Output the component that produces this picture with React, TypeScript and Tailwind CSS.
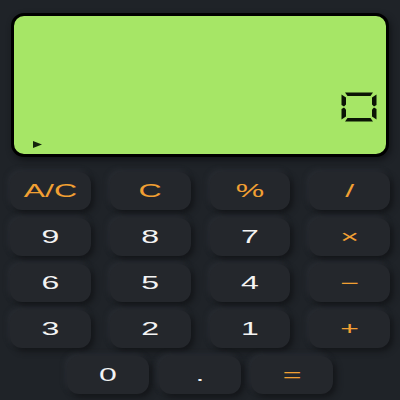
import React from "react";

type Key = { label: string; op?: boolean };

const rows: Key[][] = [
  [{ label: "A/C", op: true }, { label: "C", op: true }, { label: "%", op: true }, { label: "/", op: true }],
  [{ label: "9" }, { label: "8" }, { label: "7" }, { label: "×", op: true }],
  [{ label: "6" }, { label: "5" }, { label: "4" }, { label: "−", op: true }],
  [{ label: "3" }, { label: "2" }, { label: "1" }, { label: "+", op: true }],
];

function Btn({ k, w }: { k: Key; w: string }) {
  return (
    <button
      className={`${w} h-[38px] rounded-[12px] bg-[#24272c] shadow-[3px_3px_6px_#131518,-2px_-2px_5px_#2a2e34] flex items-center justify-center`}
    >
      <span
        className={`block text-[32px] leading-none font-normal scale-y-[0.56] ${k.op ? "text-[#f2a033]" : "text-[#f3f3f3]"}`}
        style={{ fontFamily: '"Liberation Sans", Arial, sans-serif' }}
      >
        {k.label}
      </span>
    </button>
  );
}

function SevenSegZero() {
  return (
    <svg width="36" height="30" viewBox="0 0 36 30">
      <g fill="#0b1405">
        {/* top */}
        <polygon points="4,0.5 32,0.5 29.5,4 6.5,4" />
        {/* bottom */}
        <polygon points="6.5,26 29.5,26 32,29.5 4,29.5" />
        {/* top-left */}
        <polygon points="0.5,2.5 5,5.5 5,12.5 3,14.5 0.5,13" />
        {/* bottom-left */}
        <polygon points="0.5,17 3,15.5 5,17.5 5,24.5 0.5,27.5" />
        {/* top-right */}
        <polygon points="35.5,2.5 31,5.5 31,12.5 33,14.5 35.5,13" />
        {/* bottom-right */}
        <polygon points="35.5,17 33,15.5 31,17.5 31,24.5 35.5,27.5" />
      </g>
    </svg>
  );
}

export default function App() {
  return (
    <div className="w-[400px] h-[400px] bg-[#1f2328] overflow-hidden flex flex-col">
      <div className="mx-[11px] mt-[13px] h-[144px] rounded-[13px] border-[3px] border-black bg-[#a6e666] shadow-[2px_3px_6px_#121417] flex flex-col justify-end pl-[19px] pr-[9px] pb-[6px]">
        <div className="flex justify-end">
          <SevenSegZero />
        </div>
        <div className="mt-[19px] h-[7px]">
          <svg width="9" height="7" viewBox="0 0 9 7">
            <polygon points="0,0 9,3.5 0,7" fill="#14240c" />
          </svg>
        </div>
      </div>
      <div className="mt-[15px] px-[10px] flex flex-col gap-[8px]">
        {rows.map((r, i) => (
          <div key={i} className="flex gap-[19px]">
            {r.map((k) => (
              <Btn key={k.label} k={k} w="w-[81px]" />
            ))}
          </div>
        ))}
      </div>
      <div className="mt-[8px] flex justify-center gap-[10px]">
        <Btn k={{ label: "0" }} w="w-[82px]" />
        <Btn k={{ label: "." }} w="w-[82px]" />
        <Btn k={{ label: "=", op: true }} w="w-[82px]" />
      </div>
    </div>
  );
}
